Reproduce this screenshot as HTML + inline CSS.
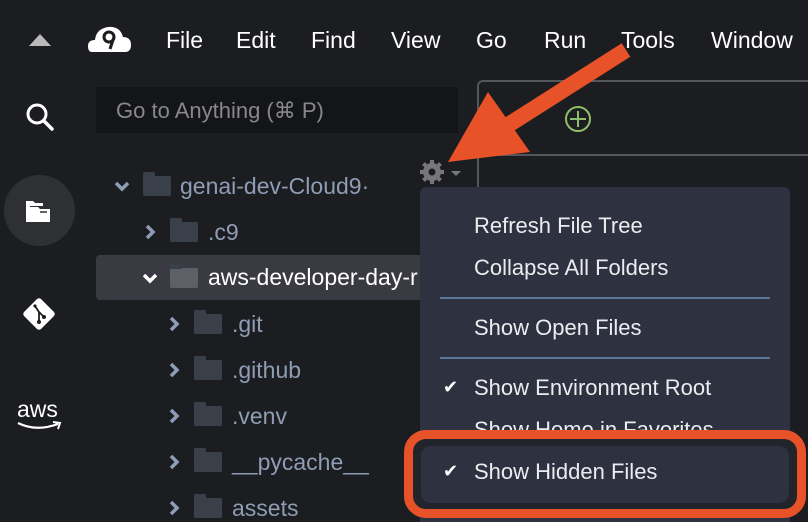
<!DOCTYPE html>
<html><head><style>
html,body{margin:0;width:808px;height:522px;overflow:hidden}
body{background:#1c1d21;position:relative;font-family:"Liberation Sans",Arial,sans-serif}
.a{position:absolute;white-space:nowrap}
.menu{color:#fff;font-size:23px;top:27px}
.tree{color:#8e9db5;font-size:23px}
.fold{position:absolute;width:28px;height:20px;background:#3a4049;border-radius:2px}
.fold:before{content:"";position:absolute;left:0;top:-4px;width:12px;height:5px;background:#3a4049;border-radius:2px 2px 0 0}
.cr,.cd{position:absolute;width:16px;height:16px}
.mi{color:#ececf0;font-size:22px;left:474px}
.ck{color:#fff;font-size:18px;left:443px}
</style></head><body>
<div class="a" style="left:29px;top:34px;width:0;height:0;border-left:11px solid transparent;border-right:11px solid transparent;border-bottom:12px solid #bbb"></div>
<svg class="a" style="left:88px;top:25px" width="44" height="28" viewBox="0 0 44 28"><path d="M4 27 Q0 27 0 21 Q0 15 7 15 Q8 4 20 2 Q32 1 35 12 Q43 12 43 20 Q43 27 37 27 Z" fill="#fff"/><circle cx="21" cy="12" r="5" fill="none" stroke="#1c1d21" stroke-width="3"/><path d="M26 12 L22 24" stroke="#1c1d21" stroke-width="3"/></svg>
<div class="a menu" style="left:166px">File</div>
<div class="a menu" style="left:236px">Edit</div>
<div class="a menu" style="left:311px">Find</div>
<div class="a menu" style="left:391px">View</div>
<div class="a menu" style="left:476px">Go</div>
<div class="a menu" style="left:544px">Run</div>
<div class="a menu" style="left:621px">Tools</div>
<div class="a menu" style="left:711px">Window</div>
<svg class="a" style="left:24px;top:101px" width="32" height="32"><circle cx="13" cy="13" r="9" fill="none" stroke="#fff" stroke-width="3"/><path d="M20 20 L28 28" stroke="#fff" stroke-width="3.5" stroke-linecap="round"/></svg>
<div class="a" style="left:4px;top:175px;width:71px;height:71px;border-radius:50%;background:#2f3034"></div>
<svg class="a" style="left:25px;top:199px" width="28" height="26"><path d="M1 2h7l2 2h8v3H5v16H1z" fill="#fff"/><path d="M5 8h8l2 2h10v13H5z" fill="#fff"/><path d="M15 13h7" stroke="#2f3034" stroke-width="1.5"/></svg>
<svg class="a" style="left:20px;top:295px" width="38" height="38"><rect x="7" y="7" width="24" height="24" rx="3" transform="rotate(45 19 19)" fill="#fff"/><path d="M15 11 L19 17 L19 27 M19 17 L24 22" stroke="#1c1d21" stroke-width="1.8" fill="none"/><circle cx="19" cy="27" r="2" fill="#1c1d21"/><circle cx="24" cy="22" r="2" fill="#1c1d21"/><circle cx="15" cy="11" r="1.6" fill="#1c1d21"/></svg>
<div class="a" style="left:17px;top:396px;color:#fff;font-size:23px">aws</div>
<svg class="a" style="left:16px;top:419px" width="50" height="16"><path d="M2 4 Q20 13 42 5" stroke="#fff" stroke-width="2.2" fill="none"/><path d="M37 3 L44 4 L42 10" stroke="#fff" stroke-width="2" fill="none"/></svg>
<div class="a" style="left:96px;top:87px;width:362px;height:46px;background:#141518"></div>
<div class="a" style="left:116px;top:98px;color:#888;font-size:22px">Go to Anything (⌘ P)</div>
<div class="a" style="left:96px;top:255px;width:330px;height:45px;background:#3a3b42;border-radius:4px"></div>
<svg class="cd" style="left:114px;top:178px"><path d="M2 5 L8 11 L14 5" stroke="#8e9db5" stroke-width="3.5" fill="none"/></svg>
<div class="fold" style="left:143px;top:176px"></div>
<div class="a tree" style="left:180px;top:173px">genai-dev-Cloud9·</div>
<svg class="cr" style="left:142px;top:224px"><path d="M5 2 L11 8 L5 14" stroke="#8e9db5" stroke-width="3.5" fill="none"/></svg>
<div class="fold" style="left:170px;top:222px"></div>
<div class="a tree" style="left:208px;top:219px">.c9</div>
<svg class="cd" style="left:142px;top:270px"><path d="M2 5 L8 11 L14 5" stroke="#fff" stroke-width="3.5" fill="none"/></svg>
<div class="fold" style="left:170px;top:268px;background:#5e6068"></div>
<div class="a tree" style="left:208px;top:264px;color:#fff">aws-developer-day-r</div>
<svg class="cr" style="left:166px;top:316px"><path d="M5 2 L11 8 L5 14" stroke="#8e9db5" stroke-width="3.5" fill="none"/></svg><div class="fold" style="left:194px;top:314px"></div><div class="a tree" style="left:232px;top:311px">.git</div>
<svg class="cr" style="left:166px;top:362px"><path d="M5 2 L11 8 L5 14" stroke="#8e9db5" stroke-width="3.5" fill="none"/></svg><div class="fold" style="left:194px;top:360px"></div><div class="a tree" style="left:232px;top:357px">.github</div>
<svg class="cr" style="left:166px;top:408px"><path d="M5 2 L11 8 L5 14" stroke="#8e9db5" stroke-width="3.5" fill="none"/></svg><div class="fold" style="left:194px;top:406px"></div><div class="a tree" style="left:232px;top:403px">.venv</div>
<svg class="cr" style="left:166px;top:454px"><path d="M5 2 L11 8 L5 14" stroke="#8e9db5" stroke-width="3.5" fill="none"/></svg><div class="fold" style="left:194px;top:452px"></div><div class="a tree" style="left:232px;top:449px">__pycache__</div>
<svg class="cr" style="left:166px;top:500px"><path d="M5 2 L11 8 L5 14" stroke="#8e9db5" stroke-width="3.5" fill="none"/></svg><div class="fold" style="left:194px;top:498px"></div><div class="a tree" style="left:232px;top:495px">assets</div>
<div class="a" style="left:477px;top:80px;width:340px;height:460px;border:2px solid #55565c;border-radius:6px;box-sizing:border-box"></div>
<div class="a" style="left:477px;top:154px;width:340px;height:2px;background:#55565c"></div>
<div class="a" style="left:565px;top:106px;width:26px;height:26px;border:2px solid #8fbf6a;border-radius:50%;box-sizing:border-box"></div>
<div class="a" style="left:577px;top:111px;width:2px;height:16px;background:#8fbf6a"></div>
<div class="a" style="left:570px;top:118px;width:16px;height:2px;background:#8fbf6a"></div>
<svg class="a" style="left:419px;top:158px" width="50" height="30"><g stroke="#777" stroke-width="4"><path d="M13 2v24M1 14h24M4.5 5.5l17 17M21.5 5.5l-17 17"/></g><circle cx="13" cy="14" r="9" fill="#777"/><circle cx="13" cy="14" r="3.5" fill="#1c1d21"/><path d="M32 13h10l-5 5z" fill="#777"/></svg>
<div class="a" style="left:420px;top:187px;width:370px;height:340px;background:#2e3140;border-radius:6px"></div>
<div class="a mi" style="top:213px">Refresh File Tree</div>
<div class="a mi" style="top:255px">Collapse All Folders</div>
<div class="a" style="left:440px;top:297px;width:330px;height:2px;background:#5d7597"></div>
<div class="a mi" style="top:315px">Show Open Files</div>
<div class="a" style="left:440px;top:357px;width:330px;height:2px;background:#5d7597"></div>
<div class="a ck" style="top:377px">✔</div>
<div class="a mi" style="top:375px">Show Environment Root</div>
<div class="a mi" style="top:417px">Show Home in Favorites</div>
<div class="a" style="left:404px;top:430px;width:402px;height:88px;border:9px solid #e85228;border-radius:22px;box-sizing:border-box;background:#22242c"></div>
<div class="a" style="left:421px;top:446px;width:368px;height:57px;background:#2e3140;border-radius:10px"></div>
<div class="a ck" style="top:461px">✔</div>
<div class="a mi" style="top:459px">Show Hidden Files</div>
<svg class="a" style="left:0;top:0" width="808" height="522"><path d="M626 50 L505 127" stroke="#e85228" stroke-width="16"/><path d="M448 162 L488 92 L530 152 Z" fill="#e85228"/></svg>
</body></html>
